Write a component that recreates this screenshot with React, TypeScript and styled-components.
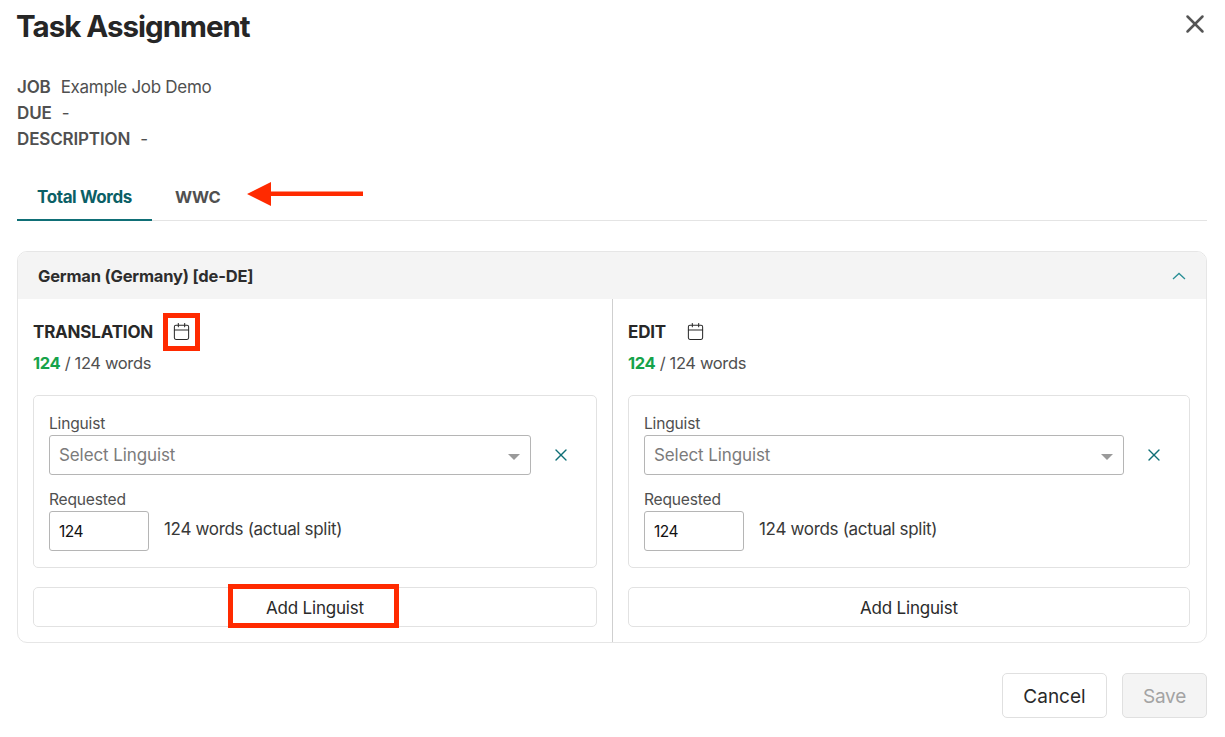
import React from 'react'
import styled, { createGlobalStyle } from 'styled-components'
import { Calendar, X } from 'lucide-react'

const GlobalStyle = createGlobalStyle`
  html, body {
    margin: 0;
    padding: 0;
    background: #ffffff;
    font-family: 'Inter', 'Liberation Sans', sans-serif;
    color: #2a2a2a;
  }
  * {
    box-sizing: border-box;
  }
`

const Page = styled.div`
  position: relative;
  width: 1225px;
  height: 737px;
  overflow: hidden;
  padding: 0 18px 0 17px;
`

const TitleRow = styled.div`
  display: flex;
  align-items: center;
  justify-content: space-between;
  height: 54px;
`

const Title = styled.h1`
  margin: -2px 0 0 -1px;
  font-size: 29.5px;
  font-weight: 700;
  letter-spacing: -1px;
  color: #262626;
`

const CloseButton = styled.button`
  display: flex;
  padding: 0;
  margin: -6px -3px 0 0;
  border: none;
  background: none;
  color: #555555;
`

const Meta = styled.div`
  margin-top: 20px;
  display: flex;
  flex-direction: column;
`

const MetaRow = styled.div`
  display: flex;
  height: 26px;
  align-items: center;
  gap: 10px;
  font-size: 17px;
  letter-spacing: -0.3px;
  color: #505050;
`

const MetaLabel = styled.span`
  font-weight: 600;
  letter-spacing: -0.15px;
`

const Tabs = styled.div`
  display: flex;
  margin-top: 16px;
  height: 53px;
  border-bottom: 1px solid #e4e4e4;
`

const Tab = styled.div<{ $active?: boolean }>`
  width: ${p => (p.$active ? '135px' : 'auto')};
  padding-left: ${p => (p.$active ? '0' : '23px')};
  padding-top: ${p => (p.$active ? '6px' : '5px')};
  height: 53px;
  display: flex;
  align-items: center;
  justify-content: center;
  font-size: ${p => (p.$active ? '17px' : '16.5px')};
  font-weight: 700;
  letter-spacing: -0.4px;
  color: ${p => (p.$active ? '#0b5f66' : '#505050')};
  border-bottom: ${p => (p.$active ? '2px solid #0f6f76' : 'none')};
`

const Panel = styled.section`
  margin-top: 30px;
  height: 392px;
  border: 1px solid #e6e6e6;
  border-radius: 10px;
  overflow: hidden;
`

const PanelHeader = styled.div`
  display: flex;
  align-items: center;
  justify-content: space-between;
  height: 47px;
  padding: 0 20px 0 20px;
  background: #f4f4f4;
  font-size: 16.5px;
  font-weight: 700;
  letter-spacing: -0.2px;
  color: #2d2d2d;
`

const Columns = styled.div`
  display: grid;
  grid-template-columns: 595px 1fr;
  height: 344px;
`

const Column = styled.div<{ $divided?: boolean }>`
  padding: 0 ${p => (p.$divided ? '15px' : '16px')} 0 15px;
  border-right: ${p => (p.$divided ? '1px solid #cfcfcf' : 'none')};
  display: flex;
  flex-direction: column;
`

const StepHeading = styled.div`
  display: flex;
  align-items: center;
  height: 22px;
  margin-top: 22px;
  font-size: 17px;
  font-weight: 700;
  letter-spacing: -0.2px;
  color: #282828;
`

const StepIcon = styled.span<{ $gap: number }>`
  display: flex;
  margin: -2px 0 0 ${p => p.$gap}px;
  color: #2a2a2a;
`

const WordCount = styled.div`
  margin-top: 9px;
  height: 22px;
  font-size: 16.5px;
  line-height: 22px;
  letter-spacing: -0.35px;
  color: #505050;
`

const Done = styled.strong`
  font-weight: 700;
  color: #16a34a;
`

const AssignCard = styled.div`
  margin-top: 21px;
  height: 173px;
  padding: 17px 5px 0 15px;
  border: 1px solid #e2e2e2;
  border-radius: 5px;
`

const FieldLabel = styled.div`
  height: 22px;
  font-size: 15.6px;
  line-height: 22px;
  letter-spacing: -0.2px;
  color: #505050;
`

const SelectRow = styled.div`
  display: flex;
  align-items: center;
`

const Select = styled.div`
  flex: 1;
  display: flex;
  align-items: center;
  justify-content: space-between;
  height: 40px;
  padding: 0 10px 0 9px;
  border: 1px solid #b5b5b5;
  border-radius: 3px;
  font-size: 17px;
  letter-spacing: -0.1px;
  color: #7b7b7b;
`

const Caret = styled.span`
  width: 0;
  height: 0;
  margin-top: 3px;
  border-left: 6px solid transparent;
  border-right: 6px solid transparent;
  border-top: 6px solid #9a9a9a;
`

const RemoveButton = styled.button`
  display: flex;
  justify-content: center;
  width: 60px;
  padding: 0;
  border: none;
  background: none;
  color: #0f6f76;
`

const RequestedBlock = styled.div`
  margin-top: 14px;
`

const RequestedRow = styled.div`
  display: flex;
  align-items: center;
  gap: 15px;
`

const CountInput = styled.div`
  width: 100px;
  height: 40px;
  display: flex;
  align-items: center;
  padding-left: 9px;
  border: 1px solid #b5b5b5;
  border-radius: 3px;
  font-size: 15.5px;
  letter-spacing: -0.5px;
  color: #111111;
`

const SplitText = styled.span`
  font-size: 17px;
  letter-spacing: -0.32px;
  margin-top: -4px;
  color: #383838;
`

const AddButton = styled.button`
  display: block;
  width: 100%;
  height: 40px;
  margin-top: 19px;
  padding-top: 2px;
  border: 1px solid #e2e2e2;
  border-radius: 5px;
  background: #ffffff;
  font-family: inherit;
  font-size: 17px;
  letter-spacing: -0.2px;
  color: #2a2a2a;
`

const Footer = styled.div`
  display: flex;
  justify-content: flex-end;
  gap: 15px;
  margin-top: 30px;
`

const FooterButton = styled.button<{ $disabled?: boolean }>`
  width: ${p => (p.$disabled ? '85px' : '105px')};
  height: 45px;
  padding-top: 2px;
  border: 1px solid #e0e0e0;
  border-radius: 5px;
  background: ${p => (p.$disabled ? '#f4f4f4' : '#ffffff')};
  font-family: inherit;
  font-size: 19px;
  letter-spacing: ${p => (p.$disabled ? '-0.2px' : '0')};
  color: ${p => (p.$disabled ? '#a3a3a3' : '#2a2a2a')};
`

// red annotations laid over the screenshot
const Marker = styled.div`
  position: absolute;
  border: 5px solid #ff2a00;
`

const ArrowMark = styled.svg`
  position: absolute;
  left: 245px;
  top: 180px;
`

const steps = [
  { name: 'TRANSLATION', iconGap: 19, divided: true },
  { name: 'EDIT', iconGap: 20, divided: false },
]

const App: React.FC = () => {
  return (
    <Page>
      <GlobalStyle />
      <TitleRow>
        <Title>Task Assignment</Title>
        <CloseButton>
          <X size={30} strokeWidth={2} />
        </CloseButton>
      </TitleRow>

      <Meta>
        <MetaRow>
          <MetaLabel>JOB</MetaLabel>
          <span>Example Job Demo</span>
        </MetaRow>
        <MetaRow>
          <MetaLabel>DUE</MetaLabel>
          <span>-</span>
        </MetaRow>
        <MetaRow>
          <MetaLabel>DESCRIPTION</MetaLabel>
          <span>-</span>
        </MetaRow>
      </Meta>

      <Tabs>
        <Tab $active>Total Words</Tab>
        <Tab>WWC</Tab>
      </Tabs>

      <Panel>
        <PanelHeader>
          <span>German (Germany) [de-DE]</span>
          <svg width="14" height="8" viewBox="0 0 14 8" fill="none">
            <path d="M1 7l6-5.5L13 7" stroke="#2a8f96" strokeWidth="1.3" />
          </svg>
        </PanelHeader>
        <Columns>
          {steps.map(step => (
            <Column key={step.name} $divided={step.divided}>
              <StepHeading>
                {step.name}
                <StepIcon $gap={step.iconGap}>
                  <Calendar size={19} strokeWidth={1.3} />
                </StepIcon>
              </StepHeading>
              <WordCount>
                <Done>124</Done> / 124 words
              </WordCount>
              <AssignCard>
                <FieldLabel>Linguist</FieldLabel>
                <SelectRow>
                  <Select>
                    Select Linguist
                    <Caret />
                  </Select>
                  <RemoveButton>
                    <X size={20} strokeWidth={1.6} />
                  </RemoveButton>
                </SelectRow>
                <RequestedBlock>
                  <FieldLabel>Requested</FieldLabel>
                  <RequestedRow>
                    <CountInput>124</CountInput>
                    <SplitText>124 words (actual split)</SplitText>
                  </RequestedRow>
                </RequestedBlock>
              </AssignCard>
              <AddButton>Add Linguist</AddButton>
            </Column>
          ))}
        </Columns>
      </Panel>

      <Footer>
        <FooterButton>Cancel</FooterButton>
        <FooterButton $disabled>Save</FooterButton>
      </Footer>

      <ArrowMark width="120" height="28" viewBox="0 0 120 28">
        <path d="M2 14L26 2v9.5h92v4.5H26V26z" fill="#ff2a00" />
      </ArrowMark>
      <Marker style={{ left: 163, top: 313, width: 37, height: 38 }} />
      <Marker style={{ left: 228, top: 584, width: 171, height: 44 }} />
    </Page>
  )
}

export default App
